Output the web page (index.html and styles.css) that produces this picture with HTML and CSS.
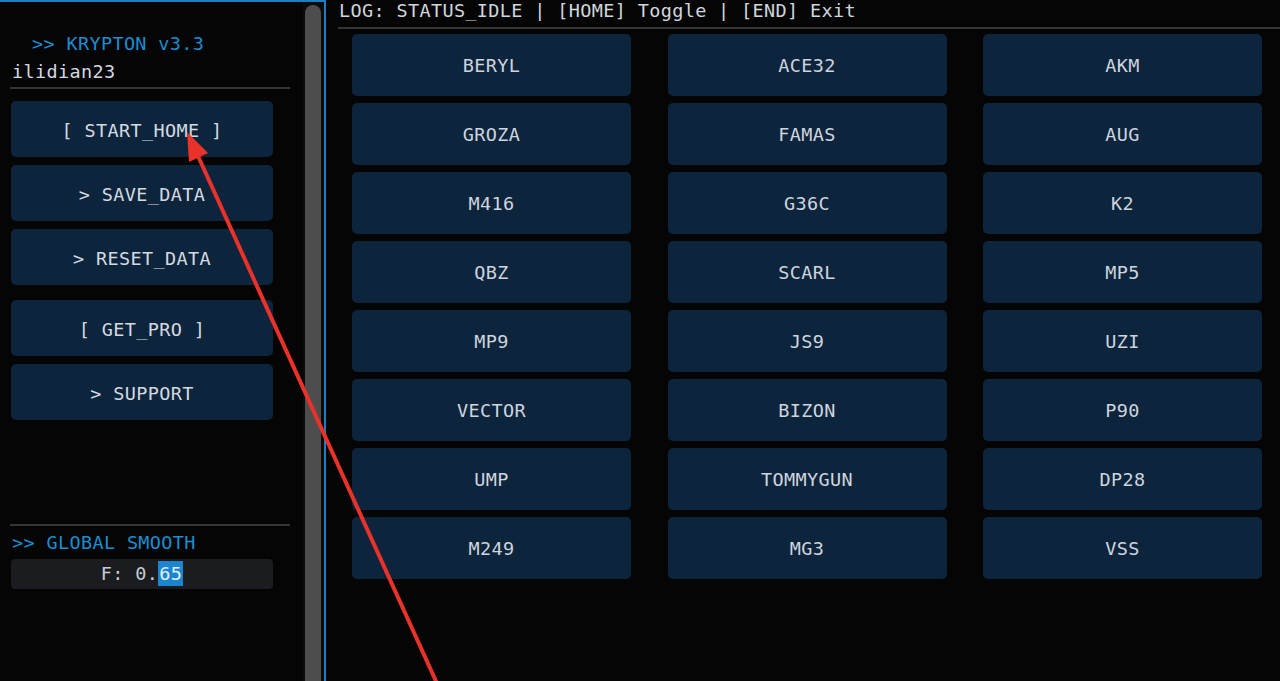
FILE: index.html
```html
<!DOCTYPE html>
<html>
<head>
    <meta charset="utf-8">
    <title>KRYPTON v3.3</title>
    <link rel="stylesheet" href="styles.css">
</head>
<body>
    <div class="app">
        <aside class="side">
            <div class="side-body">
                <div class="title">  &gt;&gt; KRYPTON v3.3</div>
                <div class="user">ilidian23</div>
                <div class="sep sep-top"></div>
                <div class="menu">
                    <button class="btn">[ START_HOME ]</button>
                    <button class="btn">&gt; SAVE_DATA</button>
                    <button class="btn">&gt; RESET_DATA</button>
                </div>
                <div class="menu menu-second">
                    <button class="btn">[ GET_PRO ]</button>
                    <button class="btn">&gt; SUPPORT</button>
                </div>
                <div class="spacer"></div>
                <div class="sep"></div>
                <div class="label">&gt;&gt; GLOBAL SMOOTH</div>
                <div class="slider">F: 0.<span class="sel">65</span></div>
            </div>
            <div class="scroll"><div class="grab"></div></div>
        </aside>
        <main class="main">
            <div class="log">LOG: STATUS_IDLE | [HOME] Toggle | [END] Exit</div>
            <div class="sep sep-wide"></div>
            <div class="grid">
                <button class="cell">BERYL</button>
                <button class="cell">ACE32</button>
                <button class="cell">AKM</button>
                <button class="cell">GROZA</button>
                <button class="cell">FAMAS</button>
                <button class="cell">AUG</button>
                <button class="cell">M416</button>
                <button class="cell">G36C</button>
                <button class="cell">K2</button>
                <button class="cell">QBZ</button>
                <button class="cell">SCARL</button>
                <button class="cell">MP5</button>
                <button class="cell">MP9</button>
                <button class="cell">JS9</button>
                <button class="cell">UZI</button>
                <button class="cell">VECTOR</button>
                <button class="cell">BIZON</button>
                <button class="cell">P90</button>
                <button class="cell">UMP</button>
                <button class="cell">TOMMYGUN</button>
                <button class="cell">DP28</button>
                <button class="cell">M249</button>
                <button class="cell">MG3</button>
                <button class="cell">VSS</button>
            </div>
        </main>
    </div>
    <!-- annotation arrow drawn over the screenshot -->
    <svg class="arrow" width="1280" height="681" viewBox="0 0 1280 681">
        <line x1="440" y1="690" x2="198" y2="156" stroke="#e8322a" stroke-width="4"/>
        <polygon points="187,132 208,153 189,162" fill="#e8322a"/>
    </svg>
</body>
</html>
```

FILE: styles.css
```css
* {
    box-sizing: border-box;
}

html, body {
    margin: 0;
    height: 100%;
    background: #050505;
    overflow: hidden;
}

body {
    font-family: "DejaVu Sans Mono", "Liberation Mono", monospace;
    font-size: 18.5px;
    letter-spacing: 0.35px;
    color: #d4dae0;
}

.app {
    display: flex;
    height: 681px;
}

/* left window */
.side {
    width: 326px;
    flex: none;
    display: flex;
    border-top: 2px solid #1a7fc4;
    border-right: 2px solid #1a7fc4;
}

.side-body {
    width: 303px;
    padding: 0 0 0 11px;
    display: flex;
    flex-direction: column;
}

.title {
    white-space: pre;
    color: #1a8ed0;
    line-height: 22px;
    margin-top: 31px;
    margin-left: -2px;
}

.user {
    line-height: 22px;
    margin-top: 6px;
    margin-left: 1px;
}

.sep {
    height: 2px;
    width: 280px;
    background: #333538;
    margin-left: -1px;
}

.sep-top {
    margin-top: 4px;
}

.menu {
    display: flex;
    flex-direction: column;
    gap: 8px;
    margin-top: 12px;
}

.menu-second {
    margin-top: 15px;
}

.btn, .cell {
    font: inherit;
    letter-spacing: inherit;
    color: inherit;
    border: none;
    background: #0d243d;
    border-radius: 5px;
    padding: 0;
}

.btn {
    width: 262px;
    height: 56px;
    padding-top: 2px;
}

.spacer {
    height: 104px;
}

.label {
    color: #1a8ed0;
    line-height: 22px;
    margin-top: 6px;
    margin-left: 1px;
}

.slider {
    width: 262px;
    height: 30px;
    margin-top: 5px;
    background: #1b1c20;
    border-radius: 4px;
    text-align: center;
    line-height: 30px;
    color: #c8ccd2;
}

.sel {
    background: #1b86cf;
    color: #e6eef4;
    display: inline-block;
    line-height: 25px;
    padding: 0 1px;
}

.scroll {
    width: 21px;
    padding: 3px 2px 0 2px;
    background: #0b0b0b;
}

.grab {
    width: 16px;
    height: 100%;
    background: #4d4d4d;
    border-radius: 8px 8px 0 0;
}

/* right area */
.main {
    flex: 1;
    padding-left: 13px;
    display: flex;
    flex-direction: column;
}

.log {
    line-height: 22px;
    margin-top: 0;
    color: #d0d6dc;
}

.sep-wide {
    width: auto;
    margin: 5px 0 0 -1px;
}

.grid {
    display: grid;
    grid-template-columns: repeat(3, 279px);
    column-gap: 36.5px;
    row-gap: 7px;
    grid-auto-rows: 62px;
    margin: 5px 0 0 13px;
}

.cell {
    color: #cdd5de;
}

.arrow {
    position: absolute;
    left: 0;
    top: 0;
    pointer-events: none;
}
```
